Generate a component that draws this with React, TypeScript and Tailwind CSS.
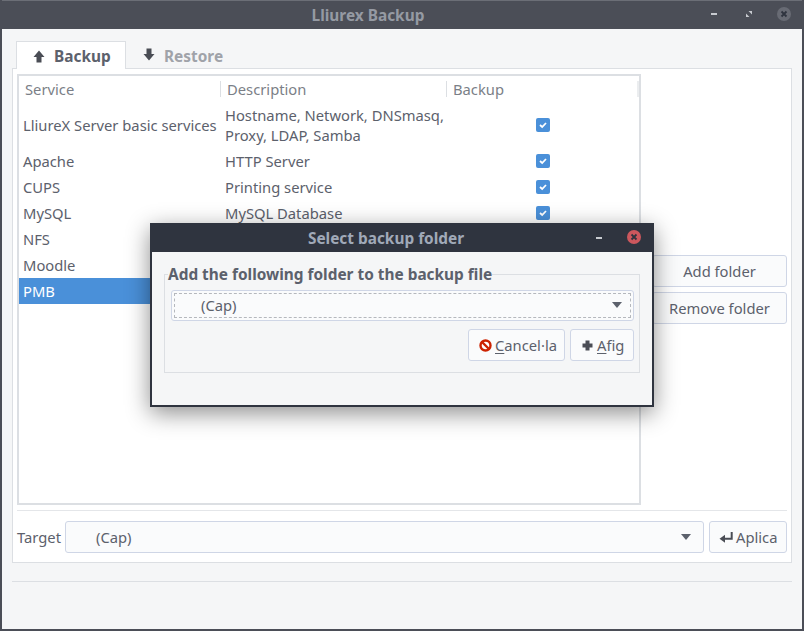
import React from 'react';

const services = [
  { name: 'LliureX Server basic services', desc: ['Hostname, Network, DNSmasq,', 'Proxy, LDAP, Samba'], tall: true },
  { name: 'Apache', desc: ['HTTP Server'] },
  { name: 'CUPS', desc: ['Printing service'] },
  { name: 'MySQL', desc: ['MySQL Database'] },
  { name: 'NFS', desc: [] },
  { name: 'Moodle', desc: [] },
  { name: 'PMB', desc: [], selected: true },
];

const ArrowUp = () => (
  <svg width="12" height="13" viewBox="0 0 12 13" className="text-[#4a4d55]">
    <path d="M6 0.5 L11.5 7 H8.5 V12.5 H3.5 V7 H0.5 Z" fill="currentColor" />
  </svg>
);

const ArrowDown = () => (
  <svg width="12" height="13" viewBox="0 0 12 13" className="text-[#4a4d55]">
    <path d="M6 12.5 L11.5 6 H8.5 V0.5 H3.5 V6 H0.5 Z" fill="currentColor" />
  </svg>
);

const Caret = () => (
  <svg width="10" height="6" viewBox="0 0 10 6" className="text-[#5c616c]">
    <path d="M0 0 H10 L5 6 Z" fill="currentColor" />
  </svg>
);

const Check = () => (
  <span className="flex h-[14px] w-[14px] items-center justify-center rounded-[2px] bg-[#4a90d9]">
    <svg width="10" height="8" viewBox="0 0 10 8">
      <path d="M2 4 L4.2 6 L8 2" fill="none" stroke="#fff" strokeWidth="1.8" />
    </svg>
  </span>
);

const App: React.FC = () => {
  return (
    <div
      className="relative flex h-[631px] w-[804px] flex-col overflow-hidden border-x-2 border-b-2 border-[#4b4e57] bg-[#f5f6f7] text-[14.75px] leading-[20px] text-[#5c616c]"
      style={{ fontFamily: '"Noto Sans", sans-serif' }}
    >
      {/* title bar */}
      <div className="-mx-[2px] flex h-[29px] shrink-0 items-center justify-center border-t border-[#6b6e76] bg-[#4b4e57] pr-[68px] pt-[2px]">
        <span className="text-[15.4px] font-bold text-[#959aa3]">Lliurex Backup</span>
        <div className="absolute right-[11px] top-[7px] flex items-center">
          <span className="h-[2px] w-[6px] bg-[#c8cbd0]" />
          <svg width="6" height="6" viewBox="0 0 6 6" className="ml-[29px]">
            <path d="M2.5 0 H6 V3.5 Z M0 2.5 L3.5 6 H0 Z" fill="#c8cbd0" />
          </svg>
          <span className="ml-[25px] flex h-[14px] w-[14px] items-center justify-center rounded-full bg-[#686b74]">
            <svg width="8" height="8" viewBox="0 0 8 8">
              <path d="M1.5 1.5 L6.5 6.5 M6.5 1.5 L1.5 6.5" stroke="#2f343f" strokeWidth="1.8" />
            </svg>
          </span>
        </div>
      </div>

      {/* notebook */}
      <div className="ml-[10px] mr-[10px] mt-[12px] flex flex-col">
        <div className="relative z-10 -mb-px flex pl-[4px]">
          <div className="flex h-[28px] w-[110px] items-center gap-[9px] border-x border-t border-[#dcdfe3] bg-white pl-[16px] pt-[3px] text-[15.4px] font-bold text-[#5c616c]">
            <span className="-mt-[2px]">
              <ArrowUp />
            </span>
            <span>Backup</span>
          </div>
          <div className="flex h-[28px] items-center gap-[9px] pl-[17px] pt-[3px] text-[15.4px] font-bold text-[#a0a3a9]">
            <span className="-mt-[4px]">
              <ArrowDown />
            </span>
            <span>Restore</span>
          </div>
        </div>

        <div className="flex h-[495px] flex-col border border-[#dcdfe3] bg-white px-[4px] pt-[5px]">
          <div className="flex h-[431px] gap-[11px]">
            {/* service list */}
            <div className="w-[624px] shrink-0 border-2 border-[#dcdfe3] bg-white">
              <div className="flex h-[26px] items-center text-[#7b7f87]">
                <div className="w-[201px] pl-[6px]">Service</div>
                <div className="h-[16px] w-[226px] border-l border-[#dcdfe3] pl-[6px] leading-[16px]">Description</div>
                <div className="h-[16px] flex-1 border-l border-[#dcdfe3] pl-[6px] leading-[16px]">Backup</div>
                <div className="h-[16px] w-[2px] bg-[#ebedef]" />
              </div>
              {services.map((s) => (
                <div
                  key={s.name}
                  className={`flex items-center ${s.tall ? 'h-[46px]' : 'h-[26px]'} ${s.selected ? 'bg-[#4a90d9] text-white' : ''}`}
                >
                  <div className="w-[202px] whitespace-nowrap pl-[4px]">{s.name}</div>
                  <div className="w-[226px] pl-[4px]">
                    {s.desc.map((line) => (
                      <div key={line} className="whitespace-nowrap">
                        {line}
                      </div>
                    ))}
                  </div>
                  <div className="flex flex-1 pl-[89px]">{!s.selected && <Check />}</div>
                </div>
              ))}
            </div>

            {/* folder buttons */}
            <div className="flex flex-1 flex-col gap-[5px] pt-[181px]">
              <button className="h-[32px] rounded-[3px] border border-[#cfd6e6] bg-[#fafbfc] text-[#5c616c]">Add folder</button>
              <button className="h-[32px] rounded-[3px] border border-[#cfd6e6] bg-[#fafbfc] text-[#5c616c]">Remove folder</button>
            </div>
          </div>

          <div className="mt-[5px] border-t border-[#e4e6e9]" />

          <div className="mt-[10px] flex h-[32px] items-center">
            <span className="w-[48px] shrink-0">Target</span>
            <div className="flex h-[32px] w-[639px] items-center justify-between rounded-[3px] border border-[#cfd6e6] bg-[#fafbfc] pl-[30px] pr-[12px]">
              <span>(Cap)</span>
              <Caret />
            </div>
            <button className="ml-[5px] flex h-[32px] flex-1 items-center gap-[3px] rounded-[3px] border border-[#cfd6e6] bg-[#fafbfc] pl-[9px]">
              <svg width="14" height="11" viewBox="0 0 14 11">
                <path d="M12.7 0 V6.7 H5" fill="none" stroke="#4a4d55" strokeWidth="2" />
                <path d="M0.5 6.7 L6 2.7 V10.7 Z" fill="#4a4d55" />
              </svg>
              <span>Aplica</span>
            </button>
          </div>
        </div>

        <div className="mt-[18px] border-t border-[#dcdfe3]" />
      </div>

      {/* modal dialog */}
      <div className="absolute left-[148px] top-[223px] flex h-[184px] w-[504px] flex-col border-2 border-[#2f343f] bg-[#f5f6f7] shadow-[0_6px_22px_rgba(0,0,0,0.45)]">
        <div className="relative flex h-[27px] shrink-0 items-center justify-center bg-[#2f343f] pr-[32px] pt-px">
          <span className="text-[15.4px] font-bold text-[#a0a9b8]">Select backup folder</span>
          <span className="absolute right-[50px] top-[12px] h-[2px] w-[6px] bg-[#c8cbd0]" />
          <span className="absolute right-[11px] top-[5px] flex h-[14px] w-[14px] items-center justify-center rounded-full bg-[#cc575d]">
            <svg width="8" height="8" viewBox="0 0 8 8">
              <path d="M1.5 1.5 L6.5 6.5 M6.5 1.5 L1.5 6.5" stroke="#2f343f" strokeWidth="1.8" />
            </svg>
          </span>
        </div>
        <div className="px-[12px] pt-[12px]">
          <fieldset className="h-[109px] border border-[#dcdfe3] pl-[6px] pr-[5px]">
            <legend className="-ml-[3px] pt-[2px] text-[15.4px] font-bold leading-[18px] text-[#5c616c]">Add the following folder to the backup file</legend>
            <div className="mt-[6px] flex h-[31px] items-center rounded-[3px] border border-[#cfd6e6] bg-[#fafbfc] p-[2px]">
              <div className="flex h-full w-full items-center justify-between border border-dashed border-[#b5b8bd] pb-[2px] pl-[26px] pr-[8px]">
                <span>(Cap)</span>
                <Caret />
              </div>
            </div>
            <div className="mt-[8px] flex justify-end gap-[5px]">
              <button className="flex h-[32px] w-[97px] items-center gap-[3px] rounded-[3px] border border-[#cfd6e6] bg-[#fafbfc] pl-[10px]">
                <svg width="13" height="13" viewBox="0 0 13 13">
                  <circle cx="6.5" cy="6.5" r="5" fill="#fff" stroke="#cc2200" strokeWidth="2.4" />
                  <path d="M3 3 L10 10" stroke="#cc2200" strokeWidth="2.4" />
                </svg>
                <span>
                  <span className="underline underline-offset-2">C</span>ancel·la
                </span>
              </button>
              <button className="flex h-[32px] w-[64px] items-center gap-[4px] rounded-[3px] border border-[#cfd6e6] bg-[#fafbfc] pl-[11px]">
                <svg width="11" height="11" viewBox="0 0 11 11">
                  <path d="M3.5 0.5 H7.5 V3.5 H10.5 V7.5 H7.5 V10.5 H3.5 V7.5 H0.5 V3.5 H3.5 Z" fill="#4a4d55" />
                </svg>
                <span>
                  <span className="underline underline-offset-2">A</span>fig
                </span>
              </button>
            </div>
          </fieldset>
        </div>
      </div>
    </div>
  );
};

export default App;
